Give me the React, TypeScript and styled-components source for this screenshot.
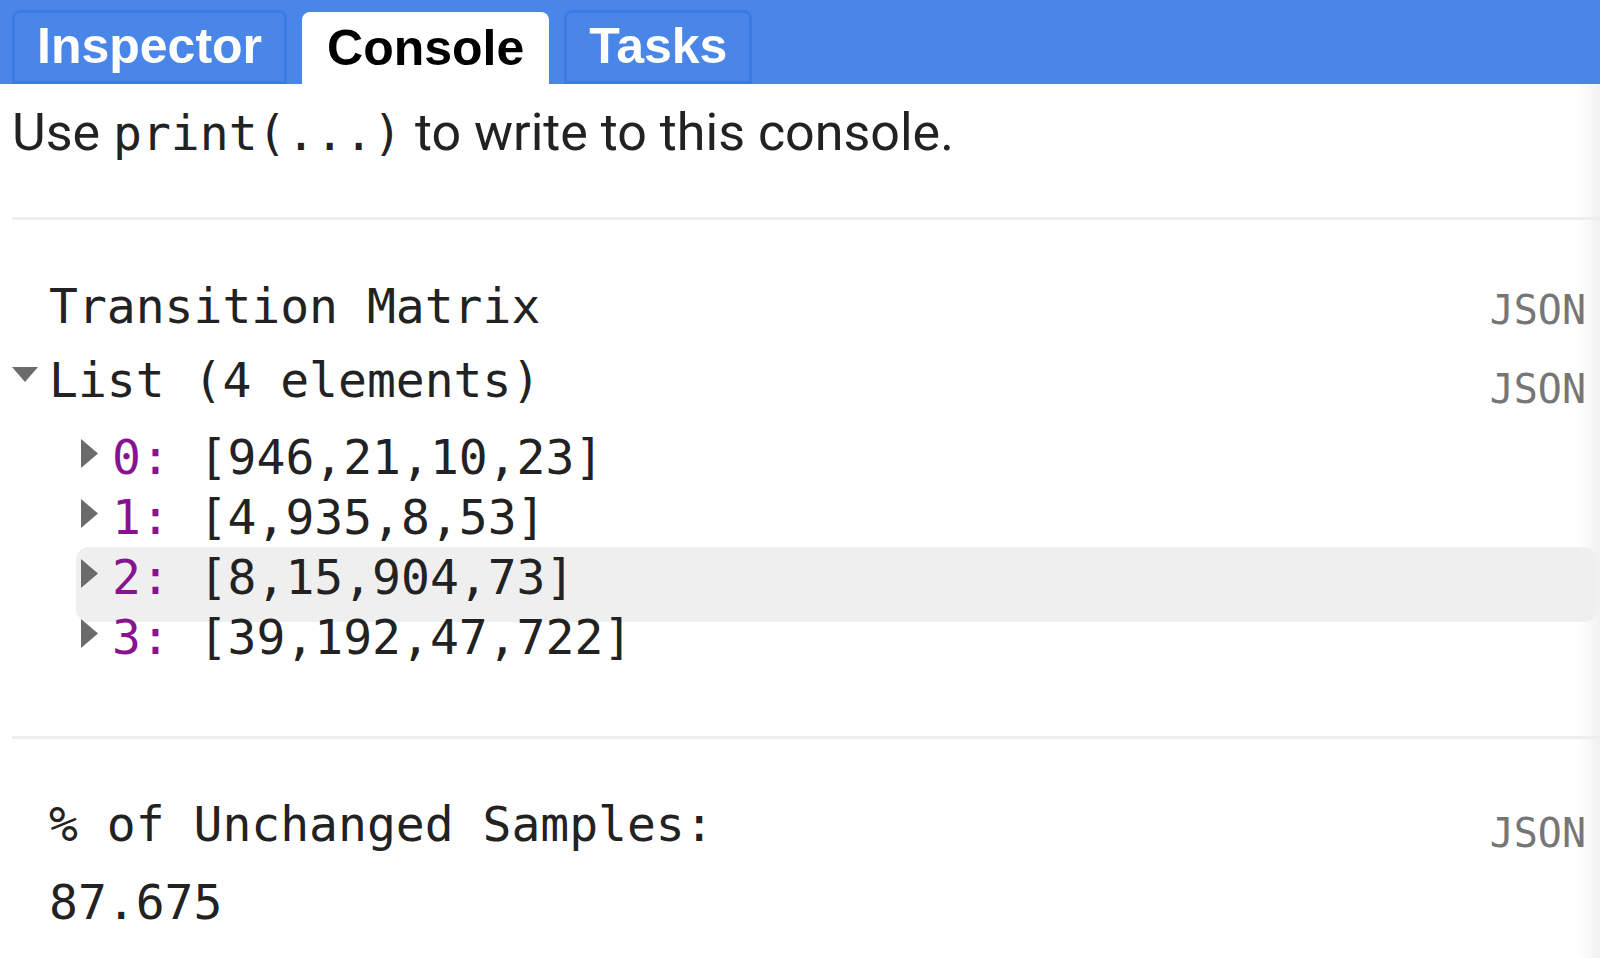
import React from "react";
import styled, { createGlobalStyle } from "styled-components";

const MONO = `"DejaVu Sans Mono", "Liberation Mono", monospace`;

const Global = createGlobalStyle`
  html, body { margin: 0; padding: 0; background: #fff; }
  body { width: 1600px; height: 958px; overflow: hidden; }
`;

const Page = styled.div`
  width: 1600px;
  height: 958px;
  display: flex;
  flex-direction: column;
  background: #fff;
  overflow: hidden;
`;

const TabBar = styled.div`
  height: 84px;
  flex: none;
  box-sizing: border-box;
  background: #4a86e8;
  display: flex;
  align-items: flex-end;
  gap: 15px;
  padding-left: 12px;
`;

const Tab = styled.div<{ $active?: boolean }>`
  height: ${(p) => (p.$active ? 72 : 74)}px;
  box-sizing: border-box;
  padding: 0 22px;
  border: 3px solid ${(p) => (p.$active ? "#fff" : "#3a7ce6")};
  border-bottom-width: ${(p) => (p.$active ? 0 : 3)}px;
  border-radius: 8px 8px 0 0;
  background: ${(p) => (p.$active ? "#fff" : "#4a86e8")};
  color: ${(p) => (p.$active ? "#000" : "#fff")};
  font: bold 50px/66px "Liberation Sans", Arial, sans-serif;
  white-space: nowrap;
`;

const Panel = styled.div`
  flex: 1;
  padding-left: 12px;
  background: linear-gradient(to right, #fff calc(100% - 22px), #f1f1f1);
  color: #222;
`;

const Intro = styled.div`
  padding: 19px 0 54px;
  font: 52px/60px Roboto, "Liberation Sans", sans-serif;
  color: #222;
  white-space: nowrap;
`;

const Code = styled.span`
  font-family: ${MONO};
  font-size: 48px;
`;

const Divider = styled.div`
  height: 3px;
  background: #eeeeee;
`;

const Section = styled.div<{ $pt: number; $pb: number }>`
  padding: ${(p) => p.$pt}px 0 ${(p) => p.$pb}px;
`;

const Line = styled.div<{ $mt?: number }>`
  display: flex;
  align-items: flex-start;
  height: 60px;
  margin-top: ${(p) => p.$mt ?? 0}px;
  font: 48px/60px ${MONO};
  color: #222;
  white-space: pre;
`;

const Toggle = styled.span`
  width: 37px;
  height: 60px;
  flex: none;
  display: flex;
  align-items: flex-start;
  padding-top: 17px;
  box-sizing: border-box;
`;

const Label = styled.span`
  flex: 1;
`;

const Json = styled.span<{ $dy: number }>`
  font: 40px/60px ${MONO};
  color: #767676;
  margin: ${(p) => p.$dy}px 14px 0 0;
`;

const Rows = styled.div`
  margin: 17px 0 0 64px;
`;

const Row = styled.div<{ $hover?: boolean }>`
  display: flex;
  align-items: flex-start;
  height: 60px;
  font: 48px/60px ${MONO};
  color: #222;
  white-space: pre;
  border-radius: 13px;
  margin: 0 3px ${(p) => (p.$hover ? -15 : 0)}px 0;
  padding: 0 0 ${(p) => (p.$hover ? 15 : 0)}px 5px;
  background: ${(p) => (p.$hover ? "#efefef" : "transparent")};
`;

const Caret = styled.span`
  width: 18px;
  height: 60px;
  flex: none;
  margin-right: 13px;
  padding-top: 12px;
  box-sizing: border-box;
  display: flex;
  align-items: flex-start;
`;

const Index = styled.span`
  color: #881391;
`;

const DownTri = () => (
  <svg width="26" height="15" viewBox="0 0 26 15">
    <polygon points="0,0 26,0 13,15" fill="#6b6b6b" />
  </svg>
);

const RightTri = () => (
  <svg width="17" height="29" viewBox="0 0 17 29">
    <polygon points="0,0 17,14.5 0,29" fill="#6b6b6b" />
  </svg>
);

const rows = [
  "[946,21,10,23]",
  "[4,935,8,53]",
  "[8,15,904,73]",
  "[39,192,47,722]",
];

export default function App() {
  return (
    <Page>
      <Global />
      <TabBar>
        <Tab>Inspector</Tab>
        <Tab $active>Console</Tab>
        <Tab>Tasks</Tab>
      </TabBar>
      <Panel>
        <Intro>
          Use <Code>print(...)</Code> to write to this console.
        </Intro>
        <Divider />
        <Section $pt={56} $pb={69}>
          <Line>
            <Toggle />
            <Label>Transition Matrix</Label>
            <Json $dy={4}>JSON</Json>
          </Line>
          <Line $mt={14}>
            <Toggle>
              <DownTri />
            </Toggle>
            <Label>List (4 elements)</Label>
            <Json $dy={9}>JSON</Json>
          </Line>
          <Rows>
            {rows.map((r, i) => (
              <Row key={i} $hover={i === 2}>
                <Caret>
                  <RightTri />
                </Caret>
                <Index>{i}:</Index>
                {" " + r}
              </Row>
            ))}
          </Rows>
        </Section>
        <Divider />
        <Section $pt={55} $pb={0}>
          <Line>
            <Toggle />
            <Label>% of Unchanged Samples:</Label>
            <Json $dy={9}>JSON</Json>
          </Line>
          <Line $mt={18}>
            <Toggle />
            <Label>87.675</Label>
          </Line>
        </Section>
      </Panel>
    </Page>
  );
}
